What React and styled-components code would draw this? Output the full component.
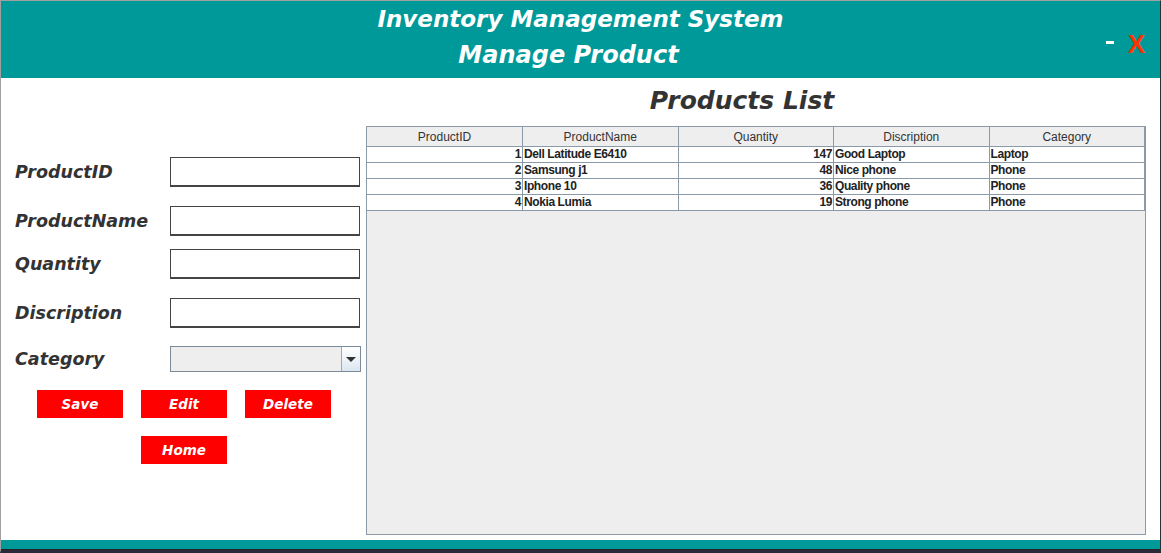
import React from 'react';
import styled, { createGlobalStyle } from 'styled-components';

const GlobalStyle = createGlobalStyle`
  html, body {
    margin: 0;
    padding: 0;
    background: #fff;
  }
  body {
    font-family: "DejaVu Sans", sans-serif;
  }
`;

const Frame = styled.div`
  width: 1161px;
  height: 553px;
  box-sizing: border-box;
  border-top: 1px solid #a0a0a0;
  border-left: 1px solid #a0a0a0;
  border-right: 1px solid #303030;
  border-bottom: 3px solid #2a2a3a;
  display: flex;
  flex-direction: column;
  background: #fff;
  overflow: hidden;
`;

const Header = styled.header`
  height: 77px;
  background: #009999;
  position: relative;
  display: flex;
  flex-direction: column;
  align-items: center;
`;

const HeaderTitle = styled.h1`
  margin: 0;
  color: #fff;
  font: italic bold ${props => props.$size || 23}px "DejaVu Sans", sans-serif;
  line-height: 36px;
  transform: translateX(${props => props.$shift || 0}px);
`;

const WindowControls = styled.div`
  position: absolute;
  right: 15px;
  top: 28px;
  display: flex;
  gap: 14px;
  align-items: center;
`;

const Minimize = styled.span`
  display: block;
  width: 8px;
  height: 3px;
  background: #fff;
  margin-top: -5px;
`;

const Close = styled.span`
  color: #ff3300;
  font: bold 26px "Liberation Sans", sans-serif;
`;

const Body = styled.main`
  flex: 1;
  display: flex;
`;

const FormColumn = styled.section`
  width: 366px;
  padding: 79px 0 0 14px;
  box-sizing: border-box;
`;

const FieldRow = styled.div`
  display: flex;
  align-items: center;
  margin-top: ${props => props.$gap || 0}px;
`;

const Label = styled.label`
  width: 155px;
  color: #333;
  font: italic bold 17.5px "DejaVu Sans", sans-serif;
`;

const Input = styled.div`
  width: 190px;
  height: 30px;
  box-sizing: border-box;
  border: 1px solid #444;
  border-bottom-width: 2px;
  background: #fff;
`;

const Combo = styled.div`
  width: 191px;
  height: 26px;
  box-sizing: border-box;
  border: 1px solid #7a8a99;
  background: #eeeeee;
  display: flex;
  justify-content: flex-end;
`;

const ComboArrow = styled.div`
  width: 18px;
  border-left: 1px solid #9aaabb;
  background: linear-gradient(#ffffff, #dce6f0);
  display: flex;
  align-items: center;
  justify-content: center;

  &::after {
    content: '';
    border-left: 5px solid transparent;
    border-right: 5px solid transparent;
    border-top: 5px solid #333;
  }
`;

const ButtonGrid = styled.div`
  display: grid;
  grid-template-columns: repeat(3, 86px);
  column-gap: 18px;
  row-gap: 18px;
  padding: 18px 0 0 22px;
`;

const RedButton = styled.button`
  height: 28px;
  border: none;
  background: #ff0000;
  color: #fff;
  font: italic bold 13.5px "DejaVu Sans", sans-serif;
  padding: 0;
  grid-column: ${props => props.$col || 'auto'};
`;

const ListColumn = styled.section`
  flex: 1;
  display: flex;
  flex-direction: column;
  padding-right: 14px;
`;

const ListTitle = styled.h2`
  margin: 0;
  height: 48px;
  line-height: 44px;
  padding-top: 8px;
  box-sizing: border-box;
  text-align: center;
  color: #333;
  font: italic bold 25px "DejaVu Sans", sans-serif;
  padding-right: 28px;
`;

const TablePanel = styled.div`
  height: 409px;
  box-sizing: border-box;
  border: 1px solid #8a9aa9;
  background: #eeeeee;
`;

const Table = styled.table`
  width: 778px;
  border-collapse: collapse;
  table-layout: fixed;
`;

const Th = styled.th`
  height: 19px;
  padding: 0;
  font: normal 12px "Liberation Sans", Arial, sans-serif;
  color: #333;
  background: #eeeeee;
  border: 1px solid #8a9aa9;
  border-top: none;
  &:first-child { border-left: none; }
`;

const Td = styled.td`
  height: 15px;
  padding: 0 1px;
  background: #fff;
  color: #222;
  font: bold 12px "Liberation Sans", Arial, sans-serif;
  letter-spacing: -0.4px;
  line-height: 15px;
  text-align: ${props => (props.$num ? 'right' : 'left')};
  border: 1px solid #8a9aa9;
  white-space: nowrap;
  overflow: hidden;
  &:first-child { border-left: none; }
`;

const Footer = styled.footer`
  height: 9px;
  background: #009999;
  margin-top: 4px;
  border-bottom: 1px solid #222;
`;

const fields = [
  { label: 'ProductID', gap: 0 },
  { label: 'ProductName', gap: 19 },
  { label: 'Quantity', gap: 13 },
  { label: 'Discription', gap: 19 },
];

const products = [
  { id: 1, name: 'Dell Latitude E6410', qty: 147, desc: 'Good Laptop', cat: 'Laptop' },
  { id: 2, name: 'Samsung j1', qty: 48, desc: 'Nice phone', cat: 'Phone' },
  { id: 3, name: 'Iphone 10', qty: 36, desc: 'Quality phone', cat: 'Phone' },
  { id: 4, name: 'Nokia Lumia', qty: 19, desc: 'Strong phone', cat: 'Phone' },
];

const columns = ['ProductID', 'ProductName', 'Quantity', 'Discription', 'Category'];

function App() {
  return (
    <>
      <GlobalStyle />
      <Frame>
        <Header>
          <HeaderTitle>Inventory Management System</HeaderTitle>
          <HeaderTitle $size={24} $shift={-12}>Manage Product</HeaderTitle>
          <WindowControls>
            <Minimize />
            <Close>X</Close>
          </WindowControls>
        </Header>
        <Body>
          <FormColumn>
            {fields.map(f => (
              <FieldRow key={f.label} $gap={f.gap}>
                <Label>{f.label}</Label>
                <Input />
              </FieldRow>
            ))}
            <FieldRow $gap={18}>
              <Label>Category</Label>
              <Combo>
                <ComboArrow />
              </Combo>
            </FieldRow>
            <ButtonGrid>
              <RedButton>Save</RedButton>
              <RedButton>Edit</RedButton>
              <RedButton>Delete</RedButton>
              <RedButton $col="2">Home</RedButton>
            </ButtonGrid>
          </FormColumn>
          <ListColumn>
            <ListTitle>Products List</ListTitle>
            <TablePanel>
              <Table>
                <thead>
                  <tr>
                    {columns.map(c => <Th key={c}>{c}</Th>)}
                  </tr>
                </thead>
                <tbody>
                  {products.map(p => (
                    <tr key={p.id}>
                      <Td $num>{p.id}</Td>
                      <Td>{p.name}</Td>
                      <Td $num>{p.qty}</Td>
                      <Td>{p.desc}</Td>
                      <Td>{p.cat}</Td>
                    </tr>
                  ))}
                </tbody>
              </Table>
            </TablePanel>
          </ListColumn>
        </Body>
        <Footer />
      </Frame>
    </>
  );
}

export default App;
